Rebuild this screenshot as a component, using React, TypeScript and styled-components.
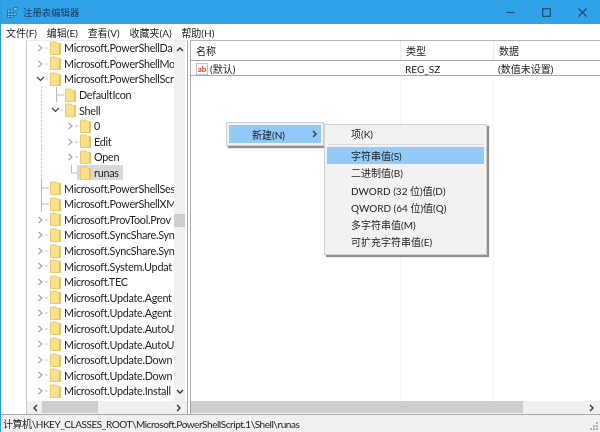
import React from "react";
import styled, { createGlobalStyle } from "styled-components";

const GlobalStyle = createGlobalStyle`
  html, body {
    margin: 0;
    padding: 0;
    background: #fff;
    overflow: hidden;
  }
  * { box-sizing: border-box; }
`;

const Window = styled.div`
  position: relative;
  width: 600px;
  height: 432px;
  display: flex;
  flex-direction: column;
  overflow: hidden;
  background: #fff;
  color: #1a1a1a;
  font-family: Lato, "Noto Sans CJK SC", sans-serif;
  font-size: 10px;
  border-left: 1px solid #2a9be4;
  filter: blur(0.35px);
`;

const TitleBar = styled.div`
  height: 24px;
  flex: none;
  margin-left: -1px;
  display: flex;
  align-items: center;
  padding-left: 7px;
  background: #2fa2ea;
  color: #173a5c;
  font-size: 9.4px;
`;

const TitleText = styled.span`
  margin-left: 5px;
`;

const WindowButtons = styled.div`
  margin-left: auto;
  display: flex;
  color: #1d4a73;
`;

const WindowButton = styled.span`
  width: 36px;
  height: 24px;
  display: flex;
  align-items: center;
  justify-content: center;
`;

const MenuBar = styled.div`
  height: 16px;
  flex: none;
  display: flex;
  align-items: center;
  gap: 9.75px;
  padding-left: 5px;
  background: #fff;
`;

const MenuLabel = styled.span`
  white-space: nowrap;
`;

const Panes = styled.div`
  flex: 1;
  min-height: 0;
  display: flex;
  border-bottom: 1px solid #a8a8a8;
`;

const LeftPane = styled.div`
  width: 189px;
  flex: none;
  padding: 0 2px 0 25px;
  display: flex;
`;

const TreeBox = styled.div`
  flex: 1;
  min-width: 0;
  display: flex;
  flex-direction: column;
  border-left: 1px solid #c4c4c4;
  border-right: 1px solid #a8a8a8;
  border-top: 1px solid #ececec;
`;

const TreeBody = styled.div`
  flex: 1;
  min-height: 0;
  display: flex;
`;

const Tree = styled.div`
  width: 147px;
  flex: none;
  padding-left: 7px;
  overflow: hidden;
  margin-top: -1px;
`;

const Row = styled.div`
  height: 15.6px;
  display: flex;
  align-items: center;
  white-space: nowrap;
  font-size: 10.8px;
  letter-spacing: -0.28px;
  color: #222;
`;

const GuideCell = styled.span<{ $line?: boolean }>`
  width: 15px;
  height: 100%;
  flex: none;
  background: ${(p) =>
    p.$line
      ? "repeating-linear-gradient(#b5b5b5 0 1px, transparent 1px 2px) 7px 0 / 1px 100% no-repeat"
      : "none"};
`;

const Connector = styled.svg`
  width: 15px;
  height: 15.6px;
  flex: none;
  display: block;
`;

const FolderIcon = styled.svg`
  width: 11px;
  height: 14px;
  margin-left: 1px;
  flex: none;
`;

const RowLabel = styled.span<{ $selected?: boolean }>`
  margin-left: ${(p) => (p.$selected ? "-14px" : "3px")};
  padding-left: ${(p) => (p.$selected ? "17px" : "0")};
  padding-right: ${(p) => (p.$selected ? "4px" : "0")};
  height: ${(p) => (p.$selected ? "15px" : "auto")};
  line-height: ${(p) => (p.$selected ? "15px" : "inherit")};
  background: ${(p) => (p.$selected ? "#d9d9d9" : "transparent")};
`;

const SelectedFolder = styled.span`
  position: relative;
  z-index: 1;
  display: flex;
`;

const VScroll = styled.div`
  width: 11px;
  flex: none;
  background: #f0f0f0;
  display: flex;
  flex-direction: column;
  align-items: center;
  padding: 5px 0 6px;
`;

const VThumb = styled.div`
  width: 100%;
  height: 13px;
  margin-top: 160px;
  background: #cdcdcd;
`;

const ArrowDownSpace = styled.div`
  margin-top: auto;
`;

const HScroll = styled.div<{ $thumbStart: number; $thumbWidth: number }>`
  height: 13px;
  flex: none;
  position: relative;
  display: flex;
  align-items: center;
  justify-content: space-between;
  padding: 0 5px;
  background: #f0f0f0;
  &::before {
    content: "";
    position: absolute;
    top: 0;
    bottom: 1px;
    left: ${(p) => p.$thumbStart}px;
    width: ${(p) => p.$thumbWidth}px;
    background: #cdcdcd;
  }
`;

const ScrollArrow = styled.svg`
  position: relative;
  display: block;
  flex: none;
`;

const RightPane = styled.div`
  flex: 1;
  min-width: 0;
  display: flex;
  flex-direction: column;
  border-left: 1px solid #a8a8a8;
  border-top: 1px solid #b4b4b4;
`;

const ListArea = styled.div`
  flex: 1;
  min-height: 0;
  display: flex;
  flex-direction: column;
`;

const ListRow = styled.div<{ $header?: boolean }>`
  display: grid;
  grid-template-columns: 209px 93px 1fr;
  align-items: center;
  height: ${(p) => (p.$header ? "20px" : "15px")};
  border-bottom: 1px solid #aaa;
  white-space: nowrap;
`;

const ListCell = styled.div<{ $divider?: boolean }>`
  height: 100%;
  display: flex;
  align-items: center;
  gap: 2px;
  padding-left: 5px;
  border-left: ${(p) => (p.$divider ? "1px solid #e3eef8" : "none")};
`;

const AbIcon = styled.span`
  width: 12px;
  height: 12px;
  flex: none;
  display: flex;
  align-items: center;
  justify-content: center;
  border: 1px solid #c9c4c0;
  background: #fff;
  color: #d2401f;
  font-size: 8px;
  font-weight: 700;
  line-height: 1;
`;

const ColumnRest = styled.div`
  flex: 1;
  display: grid;
  grid-template-columns: 209px 93px 1fr;
`;

const ColumnLine = styled.div`
  border-left: 1px solid #eef5fb;
  &:first-child {
    border-left: none;
  }
`;

const StatusBar = styled.div`
  height: 17px;
  flex: none;
  display: flex;
  align-items: center;
  padding-left: 2px;
  background: #f0f0f0;
  font-size: 10px;
  letter-spacing: -0.45px;
  position: relative;
  white-space: nowrap;
`;

const Grip = styled.svg`
  position: absolute;
  right: 1px;
  bottom: 1px;
`;

const Menu = styled.div<{ $left: number; $top: number; $width: number }>`
  position: absolute;
  left: ${(p) => p.$left}px;
  top: ${(p) => p.$top}px;
  width: ${(p) => p.$width}px;
  padding: 2px;
  background: #f2f2f2;
  border: 1px solid #cfcfcf;
  box-shadow: 2px 2px 1px #8f8f8f;
  color: #1a1a1a;
`;

const MenuItem = styled.div<{ $active?: boolean }>`
  height: 17.2px;
  display: flex;
  align-items: center;
  padding-left: 24px;
  white-space: nowrap;
  background: ${(p) => (p.$active ? "#91c9f7" : "transparent")};
`;

const MenuGap = styled.div`
  height: 1px;
  margin: 2px 1px;
  background: #d8d8d8;
`;

const ParentItem = styled(MenuItem)`
  height: 18px;
  padding-left: 23px;
  justify-content: space-between;
  padding-right: 3px;
`;

const SubMenu = styled(Menu)`
  padding: 0 2px 4px;
`;

type Kind = "closed" | "open" | "leaf" | "last";

interface TreeRow {
  label: string;
  guides: boolean[];
  kind: Kind;
  selected?: boolean;
}

const rows: TreeRow[] = [
  { label: "Microsoft.PowerShellDa", guides: [], kind: "closed" },
  { label: "Microsoft.PowerShellMo", guides: [], kind: "closed" },
  { label: "Microsoft.PowerShellScr", guides: [], kind: "open" },
  { label: "DefaultIcon", guides: [true], kind: "leaf" },
  { label: "Shell", guides: [true], kind: "open" },
  { label: "0", guides: [true, false], kind: "closed" },
  { label: "Edit", guides: [true, false], kind: "closed" },
  { label: "Open", guides: [true, false], kind: "closed" },
  { label: "runas", guides: [true, false], kind: "last", selected: true },
  { label: "Microsoft.PowerShellSes", guides: [], kind: "leaf" },
  { label: "Microsoft.PowerShellXM", guides: [], kind: "leaf" },
  { label: "Microsoft.ProvTool.Prov", guides: [], kind: "closed" },
  { label: "Microsoft.SyncShare.Syn", guides: [], kind: "closed" },
  { label: "Microsoft.SyncShare.Syn", guides: [], kind: "closed" },
  { label: "Microsoft.System.Updat", guides: [], kind: "closed" },
  { label: "Microsoft.TEC", guides: [], kind: "closed" },
  { label: "Microsoft.Update.Agent", guides: [], kind: "closed" },
  { label: "Microsoft.Update.Agent", guides: [], kind: "closed" },
  { label: "Microsoft.Update.AutoU", guides: [], kind: "closed" },
  { label: "Microsoft.Update.AutoU", guides: [], kind: "closed" },
  { label: "Microsoft.Update.Down", guides: [], kind: "closed" },
  { label: "Microsoft.Update.Down", guides: [], kind: "closed" },
  { label: "Microsoft.Update.Install", guides: [], kind: "closed" },
];

const menuItems = [
  "二进制值(B)",
  "DWORD (32 位)值(D)",
  "QWORD (64 位)值(Q)",
  "多字符串值(M)",
  "可扩充字符串值(E)",
];

const RowConnector = ({ kind }: { kind: Kind }) => (
  <Connector viewBox="0 0 15 15.6">
    {kind === "closed" && (
      <>
        <path d="M4.5 5 L8 8 L4.5 11" fill="none" stroke="#a3a3a3" strokeWidth="1.2" />
        <path d="M11 8 H14" stroke="#c4c4c4" strokeWidth="1" />
      </>
    )}
    {kind === "open" && (
      <>
        <path d="M3 6 L6.5 9.5 L10 6" fill="none" stroke="#3f3f3f" strokeWidth="1.2" />
        <path d="M11 8 H14" stroke="#c4c4c4" strokeWidth="1" />
      </>
    )}
    {kind === "leaf" && <path d="M7.5 0 V15.6 M7.5 8 H15" fill="none" stroke="#b8b8b8" strokeWidth="1" />}
    {kind === "last" && <path d="M7.5 0 V8 H15" fill="none" stroke="#b8b8b8" strokeWidth="1" />}
  </Connector>
);

const Folder = () => (
  <FolderIcon viewBox="0 0 11 14">
    <path d="M0.5 1 H6 L7.5 2.5 H10.5 V13.5 H0.5 Z" fill="#fbe08c" stroke="#e8c877" strokeWidth="1" />
    <rect x="9" y="3" width="1.5" height="10.5" fill="#e5bf68" />
  </FolderIcon>
);

const Chevron = ({ dir, color = "#333" }: { dir: "left" | "right" | "up" | "down"; color?: string }) => {
  const paths = {
    left: "M5 1 L2 4 L5 7",
    right: "M3 1 L6 4 L3 7",
    up: "M1 5 L4 2 L7 5",
    down: "M1 3 L4 6 L7 3",
  };
  return (
    <ScrollArrow width="8" height="8" viewBox="0 0 8 8">
      <path d={paths[dir]} fill="none" stroke={color} strokeWidth="1.4" />
    </ScrollArrow>
  );
};

const RegIcon = () => (
  <svg width="11" height="11" viewBox="0 0 11 11">
    <g fill="#8fd0f5" stroke="#14679f" strokeWidth="0.7">
      <rect x="0.5" y="3" width="2.5" height="2.5" />
      <rect x="3.5" y="3" width="2.5" height="2.5" />
      <rect x="0.5" y="6" width="2.5" height="2.5" />
      <rect x="3.5" y="6" width="2.5" height="2.5" />
      <rect x="6.5" y="6" width="2.5" height="2.5" />
      <rect x="0.5" y="8.5" width="2.5" height="2" />
      <rect x="3.5" y="8.5" width="2.5" height="2" />
      <rect x="7" y="0.5" width="3" height="3" />
    </g>
  </svg>
);

const App = () => {
  return (
    <>
      <GlobalStyle />
      <Window>
        <TitleBar>
          <RegIcon />
          <TitleText>注册表编辑器</TitleText>
          <WindowButtons>
            <WindowButton>
              <svg width="9" height="9" viewBox="0 0 9 9">
                <path d="M0.5 4.5 H8.5" stroke="currentColor" strokeWidth="1.2" />
              </svg>
            </WindowButton>
            <WindowButton>
              <svg width="9" height="9" viewBox="0 0 9 9">
                <rect x="0.7" y="0.7" width="7.6" height="7.6" fill="none" stroke="currentColor" strokeWidth="1.2" />
              </svg>
            </WindowButton>
            <WindowButton>
              <svg width="9" height="9" viewBox="0 0 9 9">
                <path d="M0.5 0.5 L8.5 8.5 M8.5 0.5 L0.5 8.5" stroke="currentColor" strokeWidth="1.1" />
              </svg>
            </WindowButton>
          </WindowButtons>
        </TitleBar>
        <MenuBar>
          <MenuLabel>文件(F)</MenuLabel>
          <MenuLabel>编辑(E)</MenuLabel>
          <MenuLabel>查看(V)</MenuLabel>
          <MenuLabel>收藏夹(A)</MenuLabel>
          <MenuLabel>帮助(H)</MenuLabel>
        </MenuBar>
        <Panes>
          <LeftPane>
            <TreeBox>
              <TreeBody>
                <Tree>
                  {rows.map((row, i) => (
                    <Row key={i}>
                      {row.guides.map((line, j) => (
                        <GuideCell key={j} $line={line} />
                      ))}
                      <RowConnector kind={row.kind} />
                      {row.selected ? (
                        <SelectedFolder>
                          <Folder />
                        </SelectedFolder>
                      ) : (
                        <Folder />
                      )}
                      <RowLabel $selected={row.selected}>{row.label}</RowLabel>
                    </Row>
                  ))}
                </Tree>
                <VScroll>
                  <Chevron dir="up" />
                  <VThumb />
                  <ArrowDownSpace>
                    <Chevron dir="down" />
                  </ArrowDownSpace>
                </VScroll>
              </TreeBody>
              <HScroll $thumbStart={15} $thumbWidth={56}>
                <Chevron dir="left" />
                <Chevron dir="right" />
              </HScroll>
            </TreeBox>
          </LeftPane>
          <RightPane>
            <ListArea>
              <ListRow $header>
                <ListCell>名称</ListCell>
                <ListCell $divider>类型</ListCell>
                <ListCell $divider>数据</ListCell>
              </ListRow>
              <ListRow>
                <ListCell>
                  <AbIcon>ab</AbIcon>
                  (默认)
                </ListCell>
                <ListCell>REG_SZ</ListCell>
                <ListCell>(数值未设置)</ListCell>
              </ListRow>
              <ColumnRest>
                <ColumnLine />
                <ColumnLine />
                <ColumnLine />
              </ColumnRest>
            </ListArea>
            <HScroll $thumbStart={0} $thumbWidth={332}>
              <span />
              <Chevron dir="right" />
            </HScroll>
          </RightPane>
        </Panes>
        <StatusBar>
          计算机\HKEY_CLASSES_ROOT\Microsoft.PowerShellScript.1\Shell\runas
          <Grip width="10" height="10" viewBox="0 0 10 10">
            <g fill="#b0b0b0">
              <rect x="7" y="1" width="2" height="2" />
              <rect x="4" y="4" width="2" height="2" />
              <rect x="7" y="4" width="2" height="2" />
              <rect x="1" y="7" width="2" height="2" />
              <rect x="4" y="7" width="2" height="2" />
              <rect x="7" y="7" width="2" height="2" />
            </g>
          </Grip>
        </StatusBar>
        <Menu $left={225} $top={122} $width={98}>
          <ParentItem $active>
            新建(N)
            <Chevron dir="right" />
          </ParentItem>
        </Menu>
        <SubMenu $left={323} $top={124} $width={163}>
          <MenuItem>项(K)</MenuItem>
          <MenuGap />
          <MenuItem $active>字符串值(S)</MenuItem>
          {menuItems.map((item) => (
            <MenuItem key={item}>{item}</MenuItem>
          ))}
        </SubMenu>
      </Window>
    </>
  );
};

export default App;
